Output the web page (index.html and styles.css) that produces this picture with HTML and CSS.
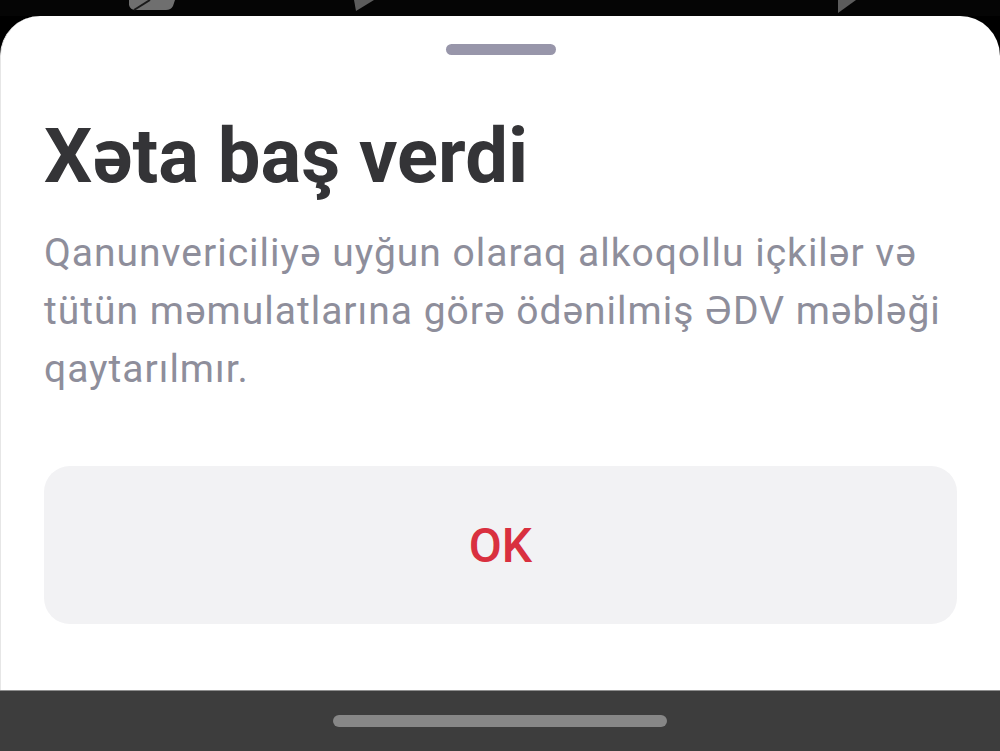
FILE: index.html
```html
<!DOCTYPE html>
<html lang="az">
<head>
    <meta charset="UTF-8">
    <meta name="viewport" content="width=device-width, initial-scale=1.0">
    <title>Xəta baş verdi</title>
    <link rel="stylesheet" href="styles.css">
</head>
<body>
    <div class="app-screen">
        <!-- dimmed page behind the sheet -->
        <div class="app-backdrop">
            <svg class="app-backdrop-art" width="1000" height="16" viewBox="0 0 1000 16">
                <path d="M129 0 L175 0 L173 6 Q171 10 166 10 L136 10 Q130 10 129 5 Z" fill="#6f6f6f"/>
                <path d="M134 10 L150 0" stroke="#1a1a1a" stroke-width="2"/>
                <path d="M354 0 L374 0 L356 11 Z" fill="#5c5c5c"/>
                <path d="M838 0 L856 0 L838 13 Z" fill="#5c5c5c"/>
            </svg>
        </div>

        <!-- bottom sheet -->
        <div class="err-sheet">
            <div class="err-handle"></div>
            <h1 class="err-title">Xəta baş verdi</h1>
            <p class="err-text">Qanunvericiliyə uyğun olaraq alkoqollu içkilər və tütün məmulatlarına görə ödənilmiş ƏDV məbləği qaytarılmır.</p>
            <button class="err-btn" type="button">OK</button>
        </div>

        <!-- system navigation bar -->
        <div class="sys-nav">
            <span class="sys-nav-pill"></span>
        </div>
    </div>
</body>
</html>
```

FILE: styles.css
```css
/* Error bottom sheet */
* {
    box-sizing: border-box;
}

html, body {
    margin: 0;
    padding: 0;
    background-color: #000000;
}

.app-screen {
    width: 1000px;
    height: 751px;
    display: flex;
    flex-direction: column;
    overflow: hidden;
    font-family: Roboto, 'Noto Sans', sans-serif;
}

.app-backdrop {
    height: 16px;
    flex-shrink: 0;
    background-color: #050505;
}

.app-backdrop-art {
    display: block;
}

.err-sheet {
    flex: 1;
    background-color: #FFFFFF;
    border-radius: 40px 40px 0 0;
    border-left: 1px solid #e6e6e6;
    padding: 28px 43px 0 43px;
    display: flex;
    flex-direction: column;
}

.err-handle {
    width: 110px;
    height: 11px;
    border-radius: 6px;
    background-color: #9896aa;
    align-self: center;
}

.err-title {
    margin: 55px 0 0 0;
    font-size: 76px;
    line-height: 92px;
    font-weight: 700;
    color: #343437;
}

.err-text {
    margin: 22px 0 0 0;
    font-size: 39px;
    line-height: 58px;
    letter-spacing: 1px;
    color: #8e8e9b;
}

.err-btn {
    margin-top: 68px;
    width: 913px;
    height: 158px;
    border: none;
    border-radius: 26px;
    background-color: #f2f2f4;
    color: #d9303f;
    font-family: Roboto, 'Noto Sans', sans-serif;
    font-size: 48px;
    font-weight: 500;
    cursor: pointer;
}

.sys-nav {
    height: 61px;
    flex-shrink: 0;
    background-color: #3d3d3d;
    border-top: 1px solid #8e8e8e;
    display: flex;
    justify-content: center;
    padding-top: 24px;
}

.sys-nav-pill {
    width: 334px;
    height: 12px;
    border-radius: 6px;
    background-color: #878787;
}
```
